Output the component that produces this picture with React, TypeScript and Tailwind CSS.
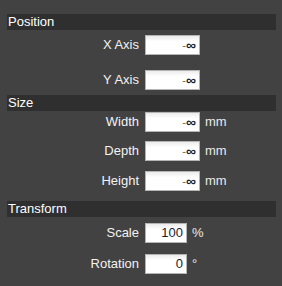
const font = { fontFamily: '"Liberation Sans", Arial, sans-serif' };

const Header = ({ title, className = "" }: { title: string; className?: string }) => (
  <div className={`h-[16px] bg-[#2f2f2f] pl-[1px] text-[13px] leading-[16px] text-white ${className}`}>
    {title}
  </div>
);

const NegInf = () => (
  <span className="flex items-center">
    <span className="text-[11px] text-[#666]">-</span>
    <span className="text-[14px] font-bold leading-none text-[#1c1c2a]">∞</span>
  </span>
);

const Field = ({
  label,
  value,
  unit,
  narrow,
  className = "",
}: {
  label: string;
  value?: string;
  unit?: string;
  narrow?: boolean;
  className?: string;
}) => (
  <div className={`flex h-[20px] items-center ${className}`}>
    <div className="w-[132px] text-right text-[13px] text-[#f2f2f2]">{label}</div>
    <div
      className={`ml-[6px] flex h-[20px] items-center justify-end border border-[#b4b4b4] bg-gradient-to-b from-[#ececec] to-white to-[30%] pr-[3px] text-[13px] text-[#1c1c2a] ${
        narrow ? "w-[42px]" : "w-[55px]"
      }`}
    >
      {value ?? <NegInf />}
    </div>
    {unit && <div className="ml-[5px] text-[13px] text-[#eaeaea]">{unit}</div>}
  </div>
);

export default function App() {
  return (
    <div className="h-[286px] w-[282px] bg-[#424242] pl-[7px] pr-[6px] pt-[14px]" style={font}>
      <Header title="Position" />
      <Field label="X Axis" className="mt-[5px]" />
      <Field label="Y Axis" className="mt-[15px]" />
      <Header title="Size" className="mt-[5px]" />
      <Field label="Width" unit="mm" className="mt-[1px]" />
      <Field label="Depth" unit="mm" className="mt-[9px]" />
      <Field label="Height" unit="mm" className="mt-[10px]" />
      <Header title="Transform" className="mt-[10px]" />
      <Field label="Scale" value="100" unit="%" narrow className="mt-[6px]" />
      <Field label="Rotation" value="0" unit="°" narrow className="mt-[11px]" />
    </div>
  );
}
